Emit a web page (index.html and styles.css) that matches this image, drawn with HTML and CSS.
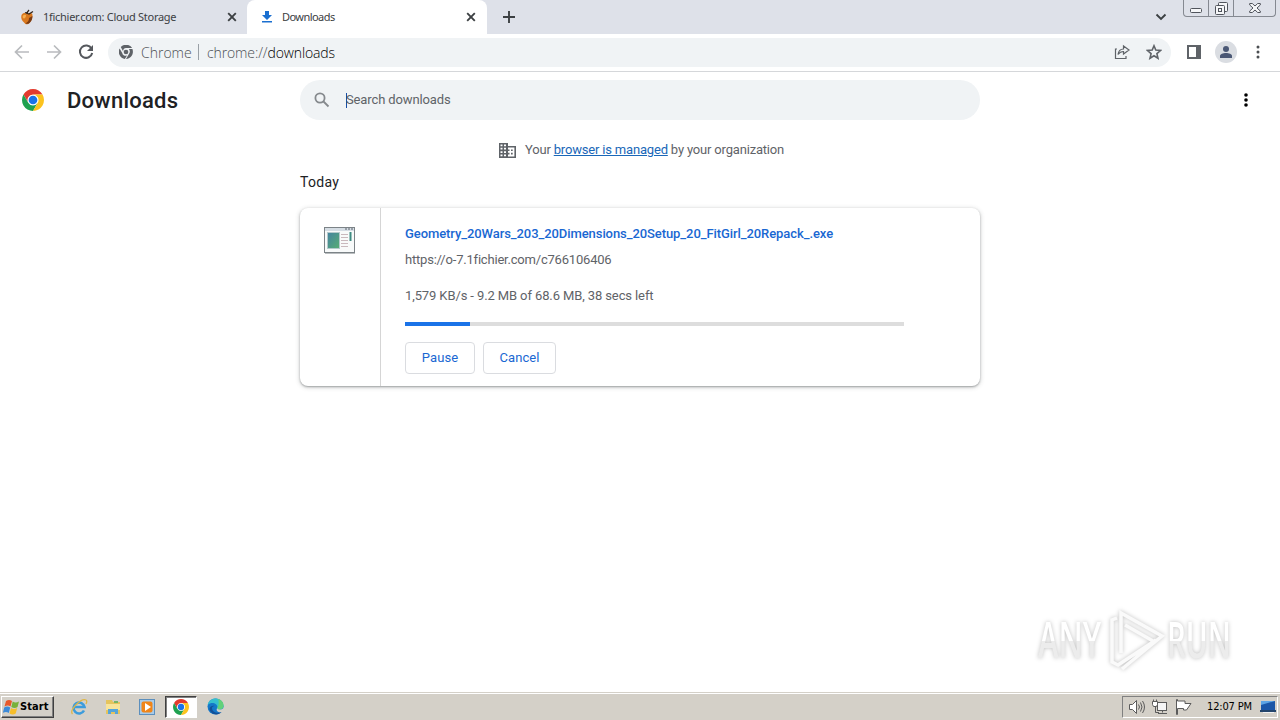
FILE: index.html
```
<!DOCTYPE html>
<html lang="en">
<head>
    <meta charset="utf-8">
    <title>Downloads</title>
    <link rel="stylesheet" href="styles.css">
</head>
<body>
    <!-- Shared logo -->
    <svg class="defs" width="0" height="0">
        <symbol id="chrome-logo" viewBox="0 0 48 48">
            <circle cx="24" cy="24" r="13" fill="#fff"/>
            <path fill="#e33b2e" d="M24 12h20.78A24 24 0 0 0 3.22 12L13.6 30A12 12 0 0 1 24 12z"/>
            <path fill="#1fa150" d="M13.61 30L3.22 12A24 24 0 0 0 24 48l10.4-18a12 12 0 0 1-20.79 0z"/>
            <path fill="#fcc31e" d="M34.4 30L24 48a24 24 0 0 0 20.78-36H24a12 12 0 0 1 10.4 18z"/>
            <circle cx="24" cy="24" r="9.5" fill="#1a73e8"/>
        </symbol>
    </svg>

    <header class="tab-strip">
        <div class="tab">
            <svg class="favicon" width="16" height="16" viewBox="0 0 16 16">
                <path fill="#d9781f" d="M1.500 6c1-2.500 4-2.500 6-1.500 2-1 5-1 5 1.500s-1 6-3 8c-2 2-4 1.500-5 0C2 12 .5 9 1.500 6z"/>
                <path fill="#f7b050" d="M3 6.500c1-1 3-1 3 0s-1 3-2 3-2-2-1-3z"/>
                <path fill="#7a3b14" d="M9 9l3.500-2c0 3-1 5-3 7-1 1-3 1-4 .5 2.500-1.500 3.500-3 3.500-5.500z"/>
                <path d="M7 5c0-2 1-3 2-4M5 3.500l4 1.500 4-2.500" fill="none" stroke="#33261c" stroke-width="1.300"/>
            </svg>
            <span class="tab-title tab-title-first">1fichier.com: Cloud Storage</span>
            <svg class="close" width="10" height="10" viewBox="0 0 10 10"><path d="M1.2 1.2l7.6 7.6M8.8 1.2L1.2 8.8"/></svg>
        </div>
        <div class="tab tab-active">
            <svg class="favicon" width="16" height="16" viewBox="0 0 16 16">
                <path fill="#1a6fd0" d="M6 2h4v4h3l-5 5-5-5h3zM3 12h10v1.6H3z"/>
            </svg>
            <span class="tab-title">Downloads</span>
            <svg class="close" width="10" height="10" viewBox="0 0 10 10"><path d="M1.2 1.2l7.6 7.6M8.8 1.2L1.2 8.8"/></svg>
        </div>
        <svg class="new-tab" width="12" height="12" viewBox="0 0 12 12"><path d="M6 0v12M0 6h12"/></svg>
        <svg class="tab-search" width="12" height="8" viewBox="0 0 12 8"><path d="M1.5 1.5L6 6l4.5-4.5"/></svg>
        <div class="window-buttons">
            <span class="wb"><svg width="12" height="5" viewBox="0 0 12 5"><rect x=".5" y=".5" width="11" height="4" rx="1"/></svg></span>
            <span class="wb"><svg width="13" height="13" viewBox="0 0 13 13"><path d="M3.5 3.5v-2q0-1 1-1h7q1 0 1 1v7q0 1-1 1h-2"/><rect x=".5" y="3.5" width="9" height="9" rx="1"/><rect x="3.5" y="6.5" width="3" height="3"/></svg></span>
            <span class="wb wb-close"><svg width="12" height="10" viewBox="0 0 12 10"><path d="M.7.5h2.6L6 3 8.700.5h2.6v1.500L8 5l3.300 3v1.500H8.700L6 7 3.300 9.500H.7V8L4 5 .7 2z"/></svg></span>
        </div>
    </header>

    <nav class="toolbar">
        <svg class="nav-icon dim" width="16" height="16" viewBox="0 0 16 16"><path d="M15 8H2M8 1.500L1.500 8 8 14.500"/></svg>
        <svg class="nav-icon dim" width="16" height="16" viewBox="0 0 16 16"><path d="M1 8h13M8 1.500L14.500 8 8 14.500"/></svg>
        <svg class="nav-icon" width="16" height="16" viewBox="0 0 16 16"><path d="M13.500 4.500A6.200 6.200 0 1 0 14.200 9"/><path class="solid" d="M15 1v6H9z"/></svg>
        <div class="omnibox">
            <svg class="site-icon" width="14" height="14" viewBox="0 0 48 48">
                <path fill="#5f6368" d="M24 10h21A25 25 0 0 0 6 7l8 14A11 11 0 0 1 24 10zM11 27L2 12a25 25 0 0 0 18 36l8-13A11 11 0 0 1 11 27zM34 14h12a25 25 0 0 1-22 34l10-17a14 14 0 0 0 0-17z"/>
                <circle cx="24" cy="24" r="8" fill="#5f6368"/>
            </svg>
            <span class="site-name">Chrome</span>
            <span class="divider"></span>
            <span class="url">chrome://<b>downloads</b></span>
            <svg class="share" width="16" height="16" viewBox="0 0 16 16"><path d="M3 5H1.500v9.500H12V12M9.500 5V2l5.500 4-5.500 4V7.500C7 7.500 5.500 8.500 4 10.500 4.500 7 6.500 5 9.500 5z"/></svg>
            <svg class="star" width="16" height="16" viewBox="0 0 16 16"><path d="M8 1.800l1.800 4.300 4.700.4-3.600 3.100 1.100 4.600L8 11.700l-4 2.500 1.100-4.600-3.600-3.100 4.700-.4z"/></svg>
        </div>
        <svg class="side-panel" width="14" height="14" viewBox="0 0 14 14"><path fill="#5f6368" d="M0 0h14v14H0zM2 2v10h7V2z" fill-rule="evenodd"/></svg>
        <span class="avatar"><svg width="12" height="12" viewBox="0 0 12 12"><circle cx="6" cy="3" r="3"/><path d="M0 12v-2c0-2 3-3 6-3s6 1 6 3v2z"/></svg></span>
        <svg class="menu" width="4" height="14" viewBox="0 0 4 14"><circle cx="2" cy="2" r="1.500"/><circle cx="2" cy="7" r="1.500"/><circle cx="2" cy="12" r="1.500"/></svg>
    </nav>

    <main class="page">
        <div class="page-header">
            <svg class="logo" width="22" height="22"><use href="#chrome-logo"/></svg>
            <h1>Downloads</h1>
            <div class="search">
                <svg width="16" height="16" viewBox="0 0 16 16"><circle cx="6" cy="6" r="4.600"/><path d="M9.500 9.500l5 5"/></svg>
                <span class="caret"></span>
                <span class="placeholder">Search downloads</span>
            </div>
            <svg class="page-menu" width="4" height="14" viewBox="0 0 4 14"><circle cx="2" cy="2" r="1.800"/><circle cx="2" cy="7" r="1.800"/><circle cx="2" cy="12" r="1.800"/></svg>
        </div>

        <div class="managed">
            <svg width="17" height="15" viewBox="0 0 17 15"><path fill="#5f6368" fill-rule="evenodd" d="M0 0h9v3h8v12H0zM1.500 1.500v1.700h2V1.500zm3.500 0v1.700h2V1.500zM1.500 4.800v1.700h2V4.800zm3.500 0v1.700h2V4.800zM1.500 8.200v1.700h2V8.200zm3.500 0v1.700h2V8.200zM1.500 11.600v1.700h2v-1.700zm3.500 0v1.700h2v-1.700zM9 4.600v1.800h1.500v1.700H9v1.700h1.500v1.700H9v1.900h6.400V4.600zm3 1.800h1.700v1.700H12zm0 3.400h1.700v1.700H12z"/></svg>
            <span class="managed-text">Your <a href="#">browser is managed</a> by your organization</span>
        </div>

        <h2>Today</h2>

        <section class="card">
            <div class="card-icon">
                <svg width="31" height="27" viewBox="0 0 31 27">
                    <defs><linearGradient id="pic" x2="1" y2="1"><stop offset="0" stop-color="#4483a0"/><stop offset="1" stop-color="#58ad73"/></linearGradient></defs>
                    <rect x=".5" y=".5" width="30" height="25" fill="#f8fafa" stroke="#7c8387"/>
                    <path d="M1 2.500h29" stroke="#d5dde4" stroke-width="3"/>
                    <path d="M21 2h2m1 0h2m1 0h2" stroke="#58616b"/>
                    <rect x="3.500" y="5.500" width="12" height="16" fill="url(#pic)" stroke="#b5c9cc"/>
                    <path d="M17 7.500h7M17 10.500h7M17 13.500h7M17 16.500h7M17 19.500h7" stroke="#c9b9bd"/>
                    <path d="M26.500 5v9" stroke="#3f8c82" stroke-width="2"/>
                    <path d="M1 26.500h30" stroke="#b9bdbf"/>
                </svg>
            </div>
            <div class="card-body">
                <a class="file-name" href="#">Geometry_20Wars_203_20Dimensions_20Setup_20_FitGirl_20Repack_.exe</a>
                <span class="file-url">https://o-7.1fichier.com/c766106406</span>
                <span class="status">1,579 KB/s - 9.2 MB of 68.6 MB, 38 secs left</span>
                <div class="progress"><div class="progress-value" style="width: 13%"></div></div>
                <div class="actions">
                    <button class="pause">Pause</button>
                    <button class="cancel">Cancel</button>
                </div>
            </div>
        </section>
    </main>

    <footer class="taskbar">
        <div class="start">
            <svg width="17" height="16" viewBox="0 0 17 16">
                <path fill="#e8582a" d="M3 2c2-1.500 4-1.500 6 0L7.500 7.500c-2-1.500-4-1-6 0z"/>
                <path fill="#78b13a" d="M9.700 2.500c2 1.500 4 1.300 6.300 0L14.500 8c-2 1.500-4 1.300-6.200 0z"/>
                <path fill="#3c8ad8" d="M1.200 8.500c2-1.300 4-1.300 6 0L5.800 14c-2-1.500-4-1.300-6 0z"/>
                <path fill="#f6be2a" d="M8 9c2 1.500 4 1.300 6.200 0l-1.500 5.500c-2 1.500-4 1.300-6.200 0z"/>
            </svg>
            <span>Start</span>
        </div>
        <div class="task">
            <svg width="18" height="18" viewBox="0 0 18 18">
                <path d="M14 12.500A5.500 5.500 0 1 1 14.500 9H5" fill="none" stroke="#3c9cdc" stroke-width="2.600"/>
                <path d="M2.500 16C-1 12 11 0 16 2c1 .5 1 2 0 4" fill="none" stroke="#dfb646" stroke-width="1.300"/>
            </svg>
        </div>
        <div class="task">
            <svg width="16" height="16" viewBox="0 0 16 16">
                <path fill="#e5c45e" d="M1 1h6l1 2h7v12H1z"/><path fill="#f8e49a" d="M1 5h14v6H1z"/>
                <path fill="#55a5d9" d="M3 15v-5h10v5h-3v-2H6v2z"/><path fill="#78b567" d="M9 2h4v2H9z"/>
            </svg>
        </div>
        <div class="task">
            <svg width="16" height="16" viewBox="0 0 16 16">
                <rect x=".5" y=".5" width="15" height="15" fill="#a9cbe8" stroke="#5c8fbd"/>
                <rect x="2.500" y="2.500" width="11" height="11" rx="2" fill="#f08519"/>
                <path fill="#fff" d="M6 4l6 4-6 4z"/>
            </svg>
        </div>
        <div class="task task-active"><svg width="16" height="16"><use href="#chrome-logo"/></svg></div>
        <div class="task">
            <svg width="17" height="17" viewBox="0 0 17 17">
                <circle cx="8.500" cy="8.500" r="8" fill="#1477c9"/>
                <path fill="#35bfcf" d="M.7 7C2-1 14-2 16.400 7c.5 3-1 4.500-4 4.500-2 0-2.500-1-2-2C11 6 5 3 .7 7z"/>
                <path fill="#62d17a" d="M11 1c4 1 6 4 5.500 7.500-.5 2-2 3-4 3-2 0-2.500-1-2-2C12 7 12 3 11 1z"/>
                <path fill="#135098" d="M5 10c0 4 5 6 9.500 4-3 4-11 3-12-3 0-3 4-4 5-3-1.500 0-2.500 1-2.500 2z"/>
                <path fill="#d4d0c8" d="M10.500 9.500c-.5 1 0 2 2 2 1.500 0 3-.5 4-1.500v4h-2c-1 .3-2 .2-3 0-2-.5-2.500-2.500-1-4.500z"/>
            </svg>
        </div>
        <div class="tray">
            <svg class="speaker" width="17" height="16" viewBox="0 0 17 16"><path fill="#fff" d="M1.500 5.500h3l4-4v13l-4-4h-3z"/><path d="M10.500 5.500q2 2.500 0 5M12.500 3.500q3 4.500 0 9M14.500 2q4 6 0 12"/></svg>
            <svg class="network" width="17" height="16" viewBox="0 0 17 16"><rect x="5.500" y="3.500" width="9" height="8" fill="#f5f5f5"/><path d="M10.500 11.500v2M6 14.500h9M3.500 7v6.500H7"/><path fill="#fff" d="M.5 2.500h5v3l-1 2h-3l-1-2zM1.500.5v2M4.500.5v2"/></svg>
            <svg class="flag" width="16" height="16" viewBox="0 0 16 16"><path fill="#fff" d="M.5.5v15h1V9.500h6v1.500h3l4.500-6.500H9V2H1.500V.5z"/></svg>
            <span class="clock">12:07 PM</span>
            <svg class="desktop" width="16" height="14" viewBox="0 0 16 14"><path fill="#1c57a8" d="M1 1h14v9H1z"/><path fill="#5ea5e6" d="M1 1h14L1 5z"/><path fill="#24456c" d="M0 10h16v2H0z"/><path fill="#f2f2f2" d="M3 12h11v1H3z"/></svg>
        </div>
    </footer>

    <!-- Watermark over the page -->
    <div class="watermark">
        <span class="wm-any">ANY</span>
        <svg width="58" height="64" viewBox="0 0 58 64">
            <path d="M13 44V4l41 23-40 33M17 16l28 16M9 9l-5 2v42l6 3 38-25"/>
        </svg>
        <span class="wm-run">RUN</span>
    </div>
</body>
</html>
```
FILE: styles.css
```
* {
    box-sizing: border-box;
}
body {
    margin: 0;
    width: 1280px;
    height: 720px;
    overflow: hidden;
    display: flex;
    flex-direction: column;
    background: #fff;
    font-family: Roboto, "Liberation Sans", sans-serif;
    color: #202124;
}
svg {
    display: block;
    flex: none;
}
.defs {
    position: absolute;
}

/* --- Tabs --- */
.tab-strip {
    display: flex;
    align-items: flex-start;
    height: 34px;
    flex: none;
    background: #dee1e9;
}
.tab {
    display: flex;
    align-items: center;
    width: 247px;
    height: 34px;
    padding: 0 10px 0 20px;
}
.tab-active {
    width: 240px;
    padding: 0 11px 0 12px;
    background: #fff;
    border-radius: 8px 8px 0 0;
}
.tab-title {
    flex: 1;
    margin-left: 7px;
    padding-bottom: 2px;
    font-family: "Noto Sans", sans-serif;
    font-size: 11px;
    letter-spacing: -0.55px;
    color: #3c4043;
    white-space: nowrap;
}
.tab-title-first {
    letter-spacing: -0.28px;
}
.close path, .new-tab path, .tab-search path {
    fill: none;
    stroke: #3c4043;
    stroke-width: 1.9;
}
.new-tab {
    margin: 11px 0 0 16px;
}
.tab-search {
    margin: 13px 16px 0 auto;
}
.window-buttons {
    display: flex;
    width: 93px;
    height: 17px;
    margin-right: 4px;
    border: 1px solid #858991;
    border-top: 0;
    border-radius: 0 0 4px 4px;
}
.wb {
    display: flex;
    align-items: center;
    justify-content: center;
    width: 25px;
    border-right: 1px solid #858991;
}
.wb:first-child {
    padding-top: 4px;
}
.wb-close {
    width: 41px;
    border: 0;
}
.wb svg {
    fill: #f5f6f8;
    stroke: #50545c;
}

/* --- Toolbar --- */
.toolbar {
    display: flex;
    align-items: center;
    height: 38px;
    flex: none;
    padding: 0 20px 1px 14px;
    border-bottom: 1px solid #d5d7da;
}
.nav-icon {
    margin-right: 16px;
    fill: none;
    stroke: #55585d;
    stroke-width: 2;
}
.nav-icon.dim {
    stroke: #b9bbbe;
    stroke-width: 1.7;
}
.nav-icon .solid {
    fill: #55585d;
    stroke: none;
}
.omnibox {
    display: flex;
    align-items: center;
    width: 1064px;
    height: 29px;
    margin-left: -2px;
    padding: 0 9px 0 11px;
    border-radius: 15px;
    background: #f0f3f5;
    font-family: "Open Sans", sans-serif;
    font-size: 14px;
    font-weight: 300;
    color: #4c5054;
}
.site-name {
    margin-left: 8px;
    width: 49px;
}
.divider {
    width: 1px;
    height: 16px;
    margin: 0 8px;
    background: #9aa0a6;
}
.url {
    letter-spacing: -0.12px;
}
.url b {
    font-weight: 300;
    color: #000;
}
.share {
    margin: 0 16px 0 auto;
}
.share, .star {
    fill: none;
    stroke: #5f6368;
    stroke-width: 1.2;
}
.star {
    stroke-width: 1.6;
}
.side-panel {
    margin-left: 16px;
}
.avatar {
    display: flex;
    align-items: center;
    justify-content: center;
    width: 22px;
    height: 22px;
    margin: 0 19px 0 14px;
    border-radius: 50%;
    background: #dadde2;
    fill: #4b5875;
}
.menu {
    fill: #4b4e52;
}

/* --- Page header --- */
.page {
    flex: 1;
}
.page-header {
    display: flex;
    align-items: center;
    height: 56px;
    padding: 0 32px 0 22px;
}
h1 {
    width: 233px;
    margin: 0 0 0 23px;
    font-size: 22px;
    font-weight: 500;
    letter-spacing: 0.25px;
}
.search {
    display: flex;
    align-items: center;
    width: 680px;
    height: 40px;
    padding-left: 14px;
    border-radius: 20px;
    background: #f0f3f5;
    font-size: 13px;
    letter-spacing: -0.12px;
    color: #5f6368;
}
.search svg {
    fill: none;
    stroke: #85898d;
    stroke-width: 1.8;
}
.caret {
    width: 1px;
    height: 15px;
    margin: 0 -1px 0 16px;
    background: #174ea6;
}
.placeholder {
    padding-bottom: 2px;
}
.page-menu {
    margin-left: auto;
}

/* --- Managed notice --- */
.managed {
    display: flex;
    align-items: center;
    width: 285px;
    height: 20px;
    margin: 12px 0 0 499px;
    font-size: 13px;
    letter-spacing: -0.18px;
    color: #5f6368;
    white-space: nowrap;
}
.managed-text {
    margin-left: 9px;
    padding-bottom: 2px;
}
.managed a {
    color: #1967b8;
}
h2 {
    margin: 12px 0 0 300px;
    height: 20px;
    font-size: 14px;
    font-weight: 400;
    line-height: 20px;
    letter-spacing: 0.3px;
}

/* --- Download card --- */
.card {
    display: flex;
    width: 680px;
    height: 178px;
    margin: 16px 0 0 300px;
    border-radius: 8px;
    background: #fff;
    box-shadow: 0 1px 2px rgba(60, 64, 67, 0.4), 0 1px 4px 1px rgba(60, 64, 67, 0.18);
}
.card-icon {
    width: 81px;
    padding: 19px 0 0 24px;
    border-right: 1px solid #d5d5d5;
}
.card-body {
    display: flex;
    flex-direction: column;
    align-items: flex-start;
    padding: 16px 0 0 24px;
    font-size: 13px;
    line-height: 20px;
    color: #5f6368;
    white-space: nowrap;
}
.file-name {
    color: #1967d2;
    font-weight: 500;
    letter-spacing: -0.08px;
    text-decoration: none;
}
.file-url {
    margin-top: 6px;
    letter-spacing: -0.2px;
}
.status {
    margin-top: 16px;
    letter-spacing: -0.11px;
}
.progress {
    width: 499px;
    height: 4px;
    margin-top: 16px;
    background: #ddd;
}
.progress-value {
    height: 4px;
    background: #1a73e8;
}
.actions {
    display: flex;
    gap: 8px;
    margin-top: 16px;
}
.actions button {
    width: 70px;
    height: 32px;
    padding: 0 0 2px;
    border: 1px solid #dadce0;
    border-radius: 4px;
    background: #fff;
    color: #1967d2;
    font: 400 13px Roboto, sans-serif;
    letter-spacing: 0.1px;
}
.actions .cancel {
    width: 73px;
}

/* --- Taskbar --- */
.taskbar {
    display: flex;
    align-items: center;
    height: 28px;
    flex: none;
    padding: 0 2px 0 1px;
    border-top: 1px solid #d4d0c8;
    background: #d4d0c8;
    box-shadow: inset 0 1px 0 #fff;
    font-family: "DejaVu Sans Condensed", "DejaVu Sans", sans-serif;
    font-size: 11px;
    color: #000;
}
.start {
    display: flex;
    align-items: center;
    width: 53px;
    height: 22px;
    margin-right: 9px;
    padding-left: 1px;
    border: 1px solid;
    border-color: #fff #404040 #404040 #fff;
    box-shadow: inset -1px -1px 0 #808080;
    font-weight: bold;
}
.start span {
    letter-spacing: 0.1px;
}
.task {
    display: flex;
    align-items: center;
    justify-content: center;
    width: 32px;
    height: 22px;
    margin-right: 2px;
}
.task-active {
    border: 1px solid;
    border-color: #404040 #fff #fff #404040;
    box-shadow: inset 1px 1px 0 #808080;
    background: #fff;
}
.tray {
    display: flex;
    align-items: center;
    width: 156px;
    height: 22px;
    margin-left: auto;
    padding-left: 5px;
    border: 1px solid;
    border-color: #808080 #fff #fff #808080;
}
.speaker, .network, .flag {
    margin-right: 7px;
    fill: none;
    stroke: #5b5b5b;
}
.clock {
    width: 46px;
    margin: 0 7px 0 8px;
    letter-spacing: -0.15px;
    white-space: nowrap;
}

/* --- Watermark --- */
.watermark {
    position: absolute;
    left: 1038px;
    top: 609px;
    display: flex;
    align-items: center;
    height: 64px;
    font: 600 50px/64px "Open Sans", sans-serif;
    filter: drop-shadow(0 0 2px rgba(0, 0, 0, 0.25));
}
.watermark svg {
    margin-left: 4px;
    fill: none;
    stroke: #fafafa;
    stroke-width: 3.5;
}
.watermark span {
    width: 66px;
    padding-bottom: 4px;
    color: transparent;
    background: linear-gradient(#fff 50%, #ececec 50%);
    -webkit-background-clip: text;
    background-clip: text;
    transform: scaleX(0.62);
    transform-origin: left;
    white-space: nowrap;
}
/* the clipped background has to cover the unscaled text */
.watermark .wm-any {
    width: 106px;
    margin-right: -40px;
}
.watermark .wm-run {
    width: 112px;
    margin-left: 1px;
    transform: scaleX(0.59);
}
```
